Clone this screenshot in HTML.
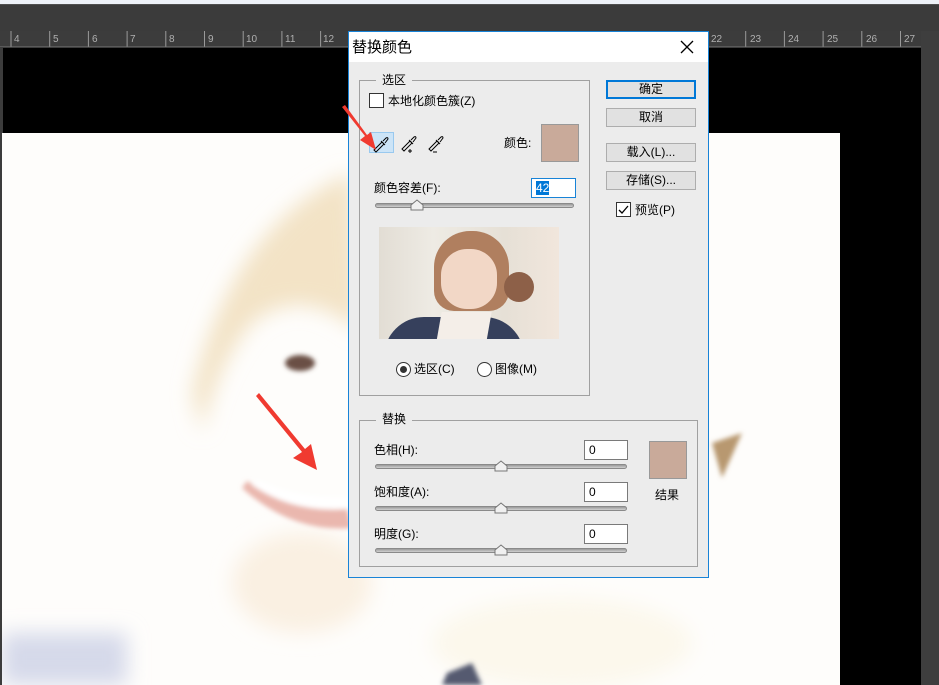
<!DOCTYPE html>
<html><head><meta charset="utf-8"><style>
*{margin:0;padding:0;box-sizing:border-box}
body{width:939px;height:685px;overflow:hidden;position:relative;background:#000;font-family:"Liberation Sans","Noto Sans CJK SC",sans-serif;font-size:12px;color:#000}
.a{position:absolute}
.t{position:absolute;white-space:nowrap;line-height:14px;font-size:12px}
.grp{position:absolute;border:1px solid #a0a0a0}
.leg{position:absolute;background:#ececec;padding:0 6px;font-size:12px;line-height:14px}
.btn{position:absolute;width:90px;height:19px;background:#e1e1e1;border:1px solid #adadad;text-align:center;font-size:12px;line-height:17px}
.inp{position:absolute;background:#fff;border:1px solid #7a7a7a;height:20px;font-size:12px;line-height:18px;padding-left:4px}
.trk{position:absolute;height:5px;border-radius:3px;background:linear-gradient(#9a9a9a,#d0d0d0);border:1px solid #8a8a8a}
.cb{position:absolute;width:15px;height:15px;background:#fff;border:1px solid #333}
</style></head><body>
<div class="a" style="left:0;top:0;width:939px;height:4px;background:#eef2f8"></div>
<div class="a" style="left:0;top:4px;width:939px;height:27px;background:#3b3b3b;border-top:1px solid #505050"></div>
<div class="a" style="left:0;top:31px;width:921px;height:16px;background:#3c3c3c"></div>
<svg class="a" style="left:0;top:31px" width="921" height="17">
<g stroke="#9a9a9a" stroke-width="1">
<path d="M11 0V16M49.7 0V16M88.4 0V16M127.1 0V16M165.8 0V16M204.5 0V16M243.2 0V16M281.9 0V16M320.6 0V16M707 0V16M745.7 0V16M784.4 0V16M823.1 0V16M861.8 0V16M900.5 0V16"/>
</g>
<line x1="0" y1="16" x2="921" y2="16" stroke="#777"/>
<g fill="#b0b0b0" font-size="10" font-family="Liberation Sans">
<text x="14" y="11">4</text><text x="53" y="11">5</text><text x="92" y="11">6</text><text x="130" y="11">7</text><text x="169" y="11">8</text><text x="208" y="11">9</text><text x="246" y="11">10</text><text x="285" y="11">11</text><text x="323" y="11">12</text>
<text x="711" y="11">22</text><text x="750" y="11">23</text><text x="788" y="11">24</text><text x="827" y="11">25</text><text x="866" y="11">26</text><text x="904" y="11">27</text>
</g>
</svg>
<div class="a" style="left:0;top:47px;width:3px;height:638px;background:#3c3c3c"></div>
<div class="a" style="left:921px;top:31px;width:18px;height:654px;background:#3e3e3e"></div>
<!-- photo -->
<svg class="a" style="left:2px;top:133px" width="838" height="552">
<defs>
<filter id="bl"><feGaussianBlur stdDeviation="10"/></filter>
<filter id="bl2"><feGaussianBlur stdDeviation="2.5"/></filter>
</defs>
<rect width="838" height="552" fill="#fefdfb"/>
<g filter="url(#bl)">
<path d="M190 260 Q230 90 350 40 L360 200 Q300 150 250 190 Q215 230 200 300Z" fill="#f3e3c6"/>
<ellipse cx="300" cy="450" rx="70" ry="50" fill="#faf0e2"/>
<rect x="0" y="500" width="125" height="52" fill="#d5d9ea"/>
<ellipse cx="560" cy="510" rx="130" ry="45" fill="#fcf8ec"/>
</g>
<g filter="url(#bl2)">
<ellipse cx="298" cy="230" rx="15" ry="8" fill="#6a5045"/>
<path d="M240 355 Q290 400 350 395 L345 375 Q290 378 245 348Z" fill="#eab7ae"/>
<path d="M250 352 Q290 380 345 376 L345 364 Q295 366 256 347Z" fill="#fff"/>
<path d="M710 310 L740 300 L720 345Z" fill="#b89870"/>
<path d="M445 540 L470 530 L480 552 L440 552Z" fill="#555a70"/>
</g>
</svg>
<!-- dialog -->
<div class="a" style="left:348px;top:31px;width:361px;height:547px;background:#ececec;border:1px solid #1883d7"></div>
<div class="a" style="left:349px;top:32px;width:359px;height:30px;background:#fff"></div>
<div class="t" style="left:352px;top:39px;font-size:15px;line-height:17px">替换颜色</div>
<svg class="a" style="left:680px;top:40px" width="14" height="14"><path d="M1 1L13 13M13 1L1 13" stroke="#000" stroke-width="1.3"/></svg>

<div class="grp" style="left:359px;top:80px;width:231px;height:316px"></div>
<div class="leg" style="left:376px;top:73px">选区</div>
<div class="cb" style="left:369px;top:93px"></div>
<div class="t" style="left:388px;top:94px">本地化颜色簇(Z)</div>
<div class="a" style="left:369px;top:132px;width:25px;height:21px;background:#cce4f7;border:1px solid #99c9ef"></div>
<svg class="a" style="left:370px;top:133px" width="80" height="22">
<g fill="none" stroke="#000" stroke-width="1">
<path d="M5 18L4 17L12 9L14 11L6 19Z"/>
<path d="M11 8L15 12M13 8L16 5Q18 4 18 6L15 10"/>
<path d="M33 17L32 16L40 8L42 10L34 18Z"/>
<path d="M39 7L43 11M41 7L44 4Q46 3 46 5L43 9"/>
<path d="M60 17L59 16L67 8L69 10L61 18Z"/>
<path d="M66 7L70 11M68 7L71 4Q73 3 73 5L70 9"/>
</g>
<path d="M38 18H42M40 16V20M63 19H67" stroke="#000" stroke-width="1"/>
</svg>
<div class="t" style="left:504px;top:136px">颜色:</div>
<div class="a" style="left:541px;top:124px;width:38px;height:38px;background:#c9aa9a;border:1px solid #999"></div>
<div class="t" style="left:374px;top:181px">颜色容差(F):</div>
<div class="inp" style="left:531px;top:178px;width:45px;border-color:#1883d7"><span style="background:#0078d7;color:#fff">42</span></div>
<div class="trk" style="left:375px;top:203px;width:199px"></div>
<svg class="a" style="left:410px;top:199px" width="14" height="12"><path d="M1 11V6L7 1L13 6V11Z" fill="#f0f0f0" stroke="#777"/></svg>
<div class="a" style="left:379px;top:227px;width:180px;height:112px;background:linear-gradient(90deg,#e2ddd4 0%,#eeebe4 30%,#e6e0d6 70%,#f1e6dc 100%);overflow:hidden">
<div class="a" style="left:55px;top:4px;width:75px;height:80px;border-radius:36px 36px 20px 20px;background:#b07f5f"></div>
<div class="a" style="left:62px;top:22px;width:56px;height:60px;border-radius:26px;background:#f2d7c6"></div>
<div class="a" style="left:125px;top:45px;width:30px;height:30px;border-radius:50%;background:#8d6048"></div>
<div class="a" style="left:5px;top:90px;width:140px;height:40px;border-radius:40px 40px 0 0;background:#36405c"></div>
<div class="a" style="left:60px;top:85px;width:50px;height:30px;background:#f4eee8;transform:skewX(-10deg)"></div>
</div>
<div class="a" style="left:396px;top:362px;width:15px;height:15px;border-radius:50%;border:1px solid #333;background:#fff"><div class="a" style="left:3px;top:3px;width:7px;height:7px;border-radius:50%;background:#333"></div></div>
<div class="t" style="left:414px;top:362px">选区(C)</div>
<div class="a" style="left:477px;top:362px;width:15px;height:15px;border-radius:50%;border:1px solid #333;background:#fff"></div>
<div class="t" style="left:495px;top:362px">图像(M)</div>

<div class="grp" style="left:359px;top:420px;width:339px;height:147px"></div>
<div class="leg" style="left:376px;top:412px">替换</div>
<div class="t" style="left:374px;top:443px">色相(H):</div>
<div class="inp" style="left:584px;top:440px;width:44px">0</div>
<div class="trk" style="left:375px;top:464px;width:252px"></div>
<svg class="a" style="left:494px;top:460px" width="14" height="12"><path d="M1 11V6L7 1L13 6V11Z" fill="#f0f0f0" stroke="#777"/></svg>
<div class="t" style="left:374px;top:485px">饱和度(A):</div>
<div class="inp" style="left:584px;top:482px;width:44px">0</div>
<div class="trk" style="left:375px;top:506px;width:252px"></div>
<svg class="a" style="left:494px;top:502px" width="14" height="12"><path d="M1 11V6L7 1L13 6V11Z" fill="#f0f0f0" stroke="#777"/></svg>
<div class="t" style="left:374px;top:527px">明度(G):</div>
<div class="inp" style="left:584px;top:524px;width:44px">0</div>
<div class="trk" style="left:375px;top:548px;width:252px"></div>
<svg class="a" style="left:494px;top:544px" width="14" height="12"><path d="M1 11V6L7 1L13 6V11Z" fill="#f0f0f0" stroke="#777"/></svg>
<div class="a" style="left:649px;top:441px;width:38px;height:38px;background:#c9aa9a;border:1px solid #999"></div>
<div class="t" style="left:655px;top:488px">结果</div>

<div class="btn" style="left:606px;top:80px;border:2px solid #0078d7;line-height:15px">确定</div>
<div class="btn" style="left:606px;top:108px">取消</div>
<div class="btn" style="left:606px;top:143px">载入(L)...</div>
<div class="btn" style="left:606px;top:171px">存储(S)...</div>
<div class="cb" style="left:616px;top:202px"></div>
<svg class="a" style="left:617px;top:203px" width="13" height="13"><path d="M2 7L5 10L11 3" fill="none" stroke="#000" stroke-width="1.3"/></svg>
<div class="t" style="left:635px;top:203px">预览(P)</div>
<!-- arrows on top -->
<svg class="a" style="left:0;top:0" width="939" height="685">
<path d="M342 107 L365 136 L360 140 L376 150 L371 132 L367 135 L345 105Z" fill="#f03a30"/>
<path d="M256 396 L302 452 L293 458 L317 470 L311 444 L305 449 L259 393Z" fill="#f03a30"/>
</svg>
</body></html>
